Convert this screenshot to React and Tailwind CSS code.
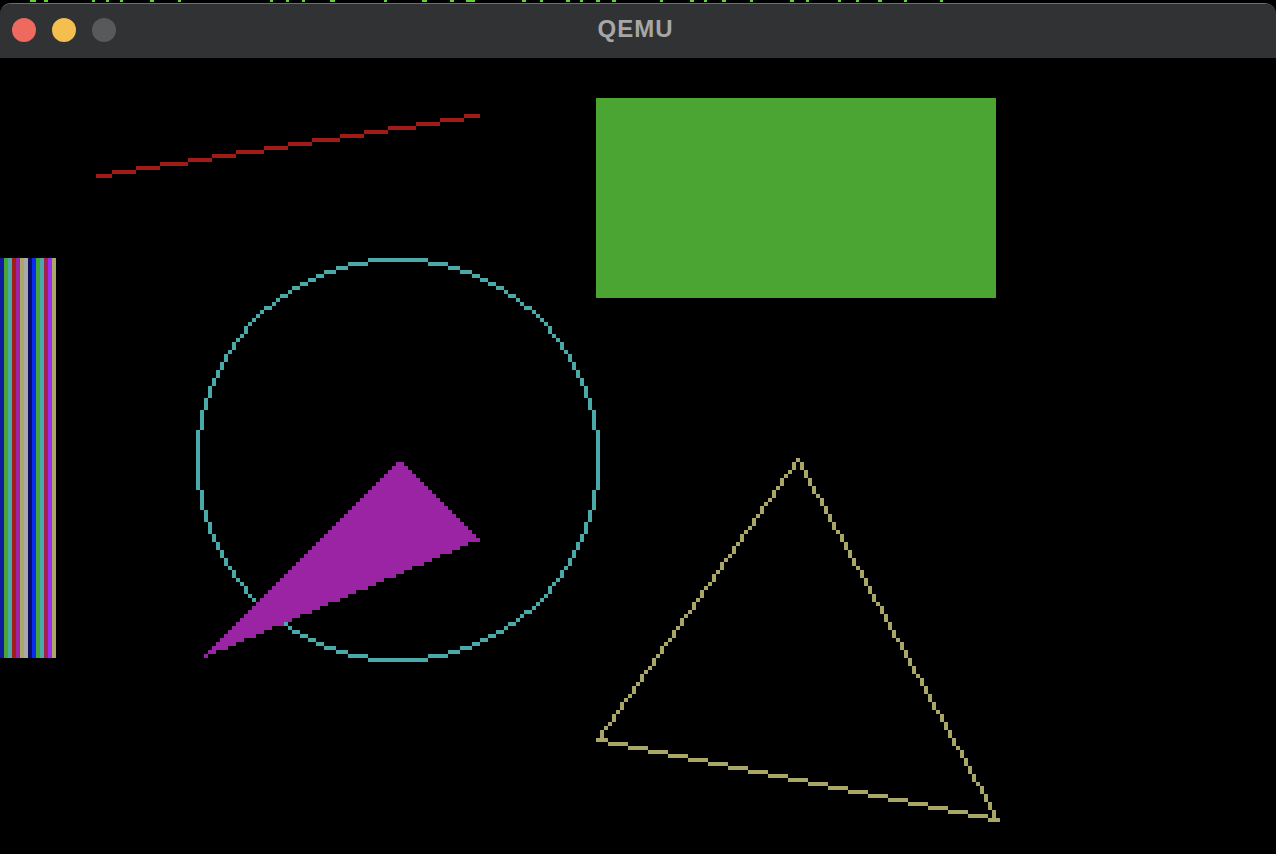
import React from 'react';

// framebuffer is 320x200, shown at 4x
const SCALE = 4;

const line = (x0, y0, x1, y1) => {
  const pts = [];
  const dx = Math.abs(x1 - x0);
  const dy = -Math.abs(y1 - y0);
  const sx = x0 < x1 ? 1 : -1;
  const sy = y0 < y1 ? 1 : -1;
  let err = dx + dy;
  let x = x0;
  let y = y0;
  while (true) {
    pts.push([x, y]);
    if (x === x1 && y === y1) break;
    const e2 = 2 * err;
    if (e2 >= dy) { err += dy; x += sx; }
    if (e2 <= dx) { err += dx; y += sy; }
  }
  return pts;
};

const circle = (cx, cy, r) => {
  const pts = [];
  let x = r;
  let y = 0;
  let err = 1 - r;
  while (x >= y) {
    [[x, y], [y, x], [-y, x], [-x, y], [-x, -y], [-y, -x], [y, -x], [x, -y]].forEach(([a, b]) =>
      pts.push([cx + a, cy + b])
    );
    y++;
    if (err < 0) {
      err += 2 * y + 1;
    } else {
      x--;
      err += 2 * (y - x) + 1;
    }
  }
  return pts;
};

// scanline fill, sampled on integer rows
const fillTriangle = (pts) => {
  const spans = [];
  const ys = pts.map((p) => p[1]);
  const minY = Math.min(...ys);
  const maxY = Math.max(...ys);
  for (let y = minY; y <= maxY; y++) {
    const xs = [];
    for (let i = 0; i < 3; i++) {
      const [ax, ay] = pts[i];
      const [bx, by] = pts[(i + 1) % 3];
      if (ay === by) continue;
      const lo = Math.min(ay, by);
      const hi = Math.max(ay, by);
      if (y < lo || y > hi) continue;
      xs.push(ax + ((y - ay) * (bx - ax)) / (by - ay));
    }
    if (xs.length < 2) continue;
    const l = Math.min(...xs);
    const r = Math.max(...xs);
    const start = Math.floor(l) + 1;
    const end = Math.floor(r);
    if (end >= start) spans.push([start, y, end - start + 1]);
  }
  return spans;
};

const palette = [
  '#000000', '#0f1a9e', '#4aa532', '#4aaaaa', '#a11d18', '#9a24a6', '#aaa767', '#aaaaaa',
  '#0c0c62', '#0a2cf0', '#46a63c', '#4aaaaa', '#a21f4e', '#9a2ef2', '#aaa767'
];

const redLine = line(25, 29, 120, 14);
const ring = circle(100, 100, 50);
const wedge = fillTriangle([[100, 100], [120, 120], [50, 150]]);
const tri = [
  ...line(200, 100, 150, 170),
  ...line(150, 170, 250, 190),
  ...line(250, 190, 200, 100)
];

const Pixels = ({ pts, color }) => (
  <g fill={color}>
    {pts.map(([x, y], i) => (
      <rect key={i} x={x} y={y} width={1} height={1} />
    ))}
  </g>
);

const Framebuffer = () => (
  <svg
    width={320 * SCALE}
    height={200 * SCALE}
    viewBox="0 0 320 200"
    shapeRendering="crispEdges"
    className="block shrink-0 -ml-[4px]"
  >
    <rect x="0" y="0" width="320" height="200" fill="#000" />
    {/* palette bars */}
    {palette.map((c, i) => (
      <rect key={i} x={i} y={50} width={1} height={100} fill={c} />
    ))}
    <Pixels pts={redLine} color="#a11c16" />
    <rect x="150" y="10" width="100" height="50" fill="#4aa532" />
    <Pixels pts={ring} color="#4aa9a9" />
    <g fill="#9a24a4">
      {wedge.map(([x, y, w], i) => (
        <rect key={i} x={x} y={y} width={w} height={1} />
      ))}
    </g>
    <Pixels pts={tri} color="#aaa766" />
  </svg>
);

const TerminalSliver = () => (
  <svg width="1276" height="4" className="block">
    {[
      [30, 6], [44, 4], [92, 3], [106, 3], [120, 3], [150, 4], [178, 3], [270, 3], [286, 3],
      [302, 3], [330, 5], [384, 3], [422, 5], [450, 4], [466, 9], [522, 4], [540, 3], [566, 4],
      [580, 3], [596, 4], [612, 4], [660, 3], [690, 4], [704, 3], [722, 4], [750, 3], [790, 4],
      [806, 3], [838, 3], [856, 3], [878, 4], [904, 3], [940, 3]
    ].map(([x, w], i) => (
      <rect key={i} x={x} y={0} width={w} height={2} fill="#5fd633" />
    ))}
  </svg>
);

export default function App() {
  return (
    <div className="w-[1276px] h-[854px] bg-black overflow-hidden flex flex-col">
      <div className="h-[3px] overflow-hidden shrink-0">
        <TerminalSliver />
      </div>
      <div className="flex-1 flex flex-col rounded-t-[11px] overflow-hidden border-t border-[#6b6c6c] bg-black">
        {/* title bar */}
        <div className="h-[54px] shrink-0 bg-[#313233] flex items-center relative">
          <div className="flex items-center gap-[16px] pl-[12px] pb-[2px]">
            <span className="w-[24px] h-[24px] rounded-full bg-[#ee6a5f]" />
            <span className="w-[24px] h-[24px] rounded-full bg-[#f4bf4f]" />
            <span className="w-[24px] h-[24px] rounded-full bg-[#58595a]" />
          </div>
          <div className="absolute inset-0 flex items-center justify-center pr-[5px] pb-[4px] pointer-events-none">
            <span
              className="text-[24px] font-bold tracking-[1px] text-[#a6a7a6]"
              style={{ fontFamily: '"Liberation Sans", Arial, sans-serif' }}
            >
              QEMU
            </span>
          </div>
        </div>
        {/* guest display */}
        <div className="flex-1 overflow-hidden flex">
          <Framebuffer />
        </div>
      </div>
    </div>
  );
}
